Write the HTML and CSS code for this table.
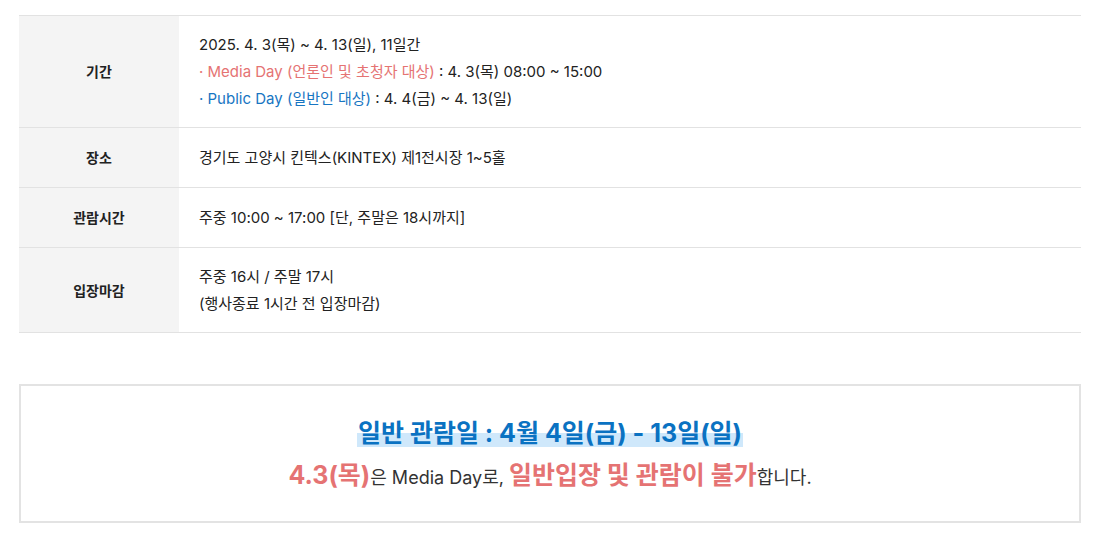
FILE: index.html
```html
<!DOCTYPE html>
<html lang="ko">
<head>
<meta charset="utf-8">
<link rel="stylesheet" href="styles.css">
</head>
<body>
<div class="wrap">
  <table class="info">
    <tr>
      <th>기간</th>
      <td>
        <div>2025. 4. 3(목) ~ 4. 13(일), 11일간</div>
        <div><span class="red">· Media Day (언론인 및 초청자 대상)</span> : 4. 3(목) 08:00 ~ 15:00</div>
        <div><span class="blue">· Public Day (일반인 대상)</span> : 4. 4(금) ~ 4. 13(일)</div>
      </td>
    </tr>
    <tr>
      <th>장소</th>
      <td>경기도 고양시 킨텍스(KINTEX) 제1전시장 1~5홀</td>
    </tr>
    <tr>
      <th>관람시간</th>
      <td>주중 10:00 ~ 17:00 [단, 주말은 18시까지]</td>
    </tr>
    <tr>
      <th>입장마감</th>
      <td>
        <div>주중 16시 / 주말 17시</div>
        <div>(행사종료 1시간 전 입장마감)</div>
      </td>
    </tr>
  </table>

  <div class="notice">
    <p class="notice-title"><span class="hl">일반 관람일 : 4월 4일(금) - 13일(일)</span></p>
    <p class="notice-sub"><strong>4.3(목)</strong>은 Media Day로, <strong>일반입장 및 관람이 불가</strong>합니다.</p>
  </div>
</div>
</body>
</html>
```

FILE: styles.css
```css
* { box-sizing: border-box; }
body {
  margin: 0;
  background: #fff;
  font-family: Inter, "Noto Sans CJK KR", sans-serif;
  color: #222;
}
.wrap {
  padding: 15px 20px 0 19px;
}
.info {
  width: 1062px;
  border-collapse: collapse;
  font-size: 15px;
  line-height: 27px;
  border-top: 1px solid #e2e2e2;
}
.info tr {
  border-bottom: 1px solid #e2e2e2;
}
.info th {
  width: 160px;
  background: #f4f4f4;
  font-weight: 700;
  font-size: 14px;
  text-align: center;
  vertical-align: middle;
  color: #222;
  height: 60px;
  padding: 0;
}
.info td {
  padding: 15px 20px;
  vertical-align: middle;
  height: 60px;
}
.red { color: #e57373; }
.blue { color: #1775c2; }

.notice {
  margin-top: 51px;
  width: 1062px;
  border: 2px solid #e3e3e3;
  padding: 30px 0 25px;
  text-align: center;
}
.notice p { margin: 0; }
.notice-title {
  font-size: 25px;
  font-weight: 700;
  line-height: 34px;
  color: #0a72c2;
}
.hl {
  background: linear-gradient(to bottom, transparent 50%, #cfe8fb 50%, #cfe8fb 96%, transparent 96%);
  padding: 0 1px;
}
.notice-sub {
  margin-top: 7px !important;
  font-size: 18px;
  line-height: 36px;
  color: #333;
}
.notice-sub strong {
  font-size: 25px;
  font-weight: 700;
  color: #e57373;
}
```
